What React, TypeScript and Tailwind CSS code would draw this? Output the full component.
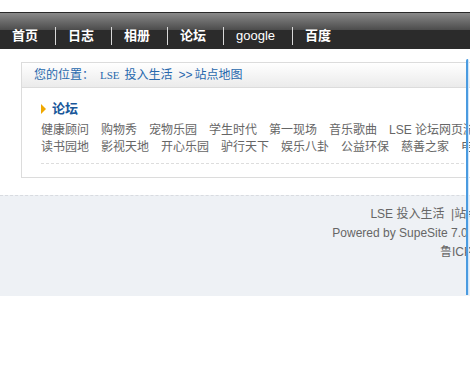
import React from 'react';

const navItems = ['首页', '日志', '相册', '论坛', 'google', '百度'];

const row1 = ['健康顾问', '购物秀', '宠物乐园', '学生时代', '第一现场', '音乐歌曲', 'LSE 论坛网页游戏'];
const row2 = ['读书园地', '影视天地', '开心乐园', '驴行天下', '娱乐八卦', '公益环保', '慈善之家', '电脑网络'];

const cjk = { fontFamily: '"Liberation Sans", "Noto Sans CJK SC", sans-serif' };

export default function App() {
  return (
    <div className="relative w-full h-[365px] overflow-hidden bg-white" style={cjk}>
      <div className="w-[640px]">
        {/* Top nav */}
        <div className="pt-3">
          <div className="h-[37px] border-t border-[#2a2a2a] flex flex-col">
            <div className="h-[17px] bg-gradient-to-b from-[#8a8a8a] to-[#4c4c4c]" />
            <div className="h-[19px] bg-[#2b2b2b]" />
          </div>
          <ul className="-mt-[37px] h-[37px] flex items-center pt-[10px] text-[13px] text-white">
            {navItems.map((item, i) => (
              <li key={item} className="flex items-center">
                <span
                  className={`pl-3 pr-[17px] ${item === 'google' ? 'font-normal text-[13px]' : 'font-bold'}`}
                >
                  {item}
                </span>
                {i < navItems.length - 1 && <span className="block w-px h-[18px] bg-[#d8d8d8]" />}
              </li>
            ))}
          </ul>
        </div>

        {/* Site map box */}
        <div className="ml-[21px] mt-[13px] border border-[#dcdcdc] text-[12px]">
          <div className="h-[25px] flex items-center pl-3 bg-gradient-to-b from-white to-[#ebebeb] border-b border-[#dcdcdc] text-[#2768ad]">
            <span>您的位置：</span>
            <span className="ml-[6px] text-[11px]" style={{ fontFamily: '"Liberation Serif", serif' }}>LSE</span>
            <span className="ml-[5px]">投入生活</span>
            <span className="ml-[6px]">&gt;&gt;</span>
            <span className="ml-[2px]">站点地图</span>
          </div>
          <div className="pl-[19px] pt-[12px] pb-[13px]">
            <div className="flex items-center gap-[6px] h-[18px]">
              <span className="block w-0 h-0 border-y-[5px] border-y-transparent border-l-[5px] border-l-[#f0a800]" />
              <span className="font-bold text-[13px] text-[#19579a]">论坛</span>
            </div>
            <div className="mt-[4px] text-[#666] leading-[17px]">
              <div className="flex gap-3 whitespace-nowrap">
                {row1.map((t) => (
                  <span key={t}>{t}</span>
                ))}
              </div>
              <div className="flex gap-3 whitespace-nowrap">
                {row2.map((t) => (
                  <span key={t}>{t}</span>
                ))}
              </div>
            </div>
            <div className="mt-[7px] border-t border-dashed border-[#dddddd]" />
          </div>
        </div>

        {/* Footer */}
        <div className="mt-[17px] h-[101px] border-t border-dashed border-[#d8dbe0] bg-[#eef1f5] text-[12px] text-[#666] leading-[19px]">
          <div className="w-[560px] pt-[9px] flex flex-col items-end">
            <div className="whitespace-nowrap">LSE 投入生活 &nbsp;|站点地图 | 联系我们</div>
            <div className="whitespace-nowrap">Powered by SupeSite 7.0 © 2001-2009 Inc</div>
            <div className="whitespace-nowrap">鲁ICP备05012345号-1</div>
          </div>
        </div>
      </div>

      {/* blue frame edge */}
      <div className="absolute left-[466px] top-[59px] w-[3px] h-[236px] rounded-t-[2px] border-l-2 border-[#4a9be0] bg-[#cfe6fb]" />
    </div>
  );
}
